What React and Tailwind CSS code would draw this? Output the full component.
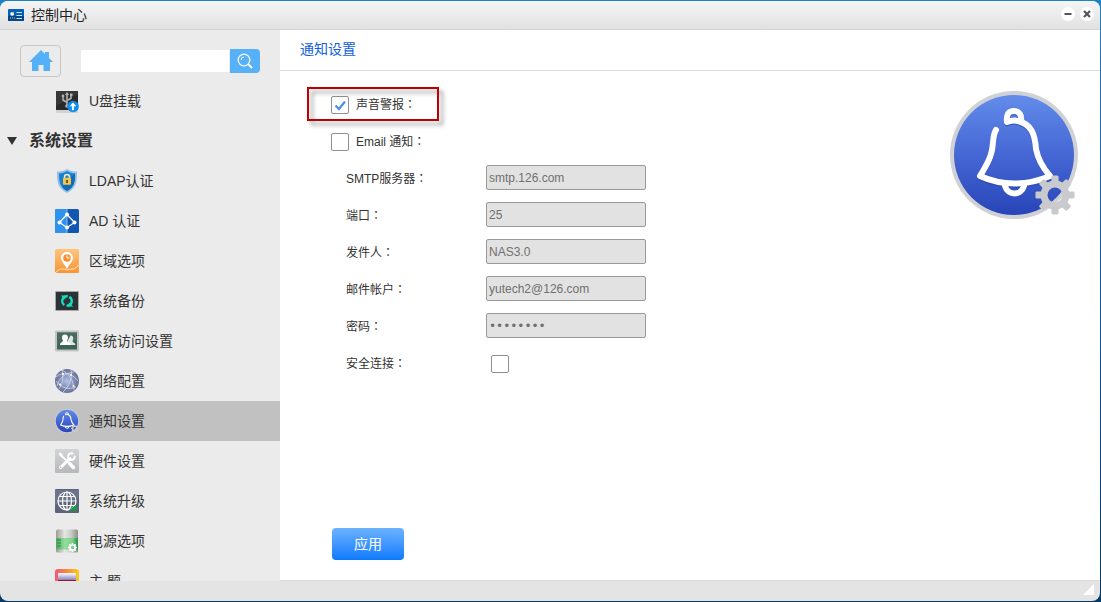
import React, { useState } from 'react';

const GEAR_ANGLES = [0, 45, 90, 135, 180, 225, 270, 315];

const Gear = ({ cx, cy, r, color }) => (
    <g transform={`translate(${cx} ${cy}) scale(${r / 19})`}>
        <circle r="11" fill="none" stroke={color} strokeWidth="7" />
        {GEAR_ANGLES.map((angle) => (
            <rect key={angle} x="-3.6" y="-19.5" width="7.2" height="9" rx="1.4" fill={color} transform={`rotate(${angle})`} />
        ))}
    </g>
);

const BellIcon = ({ id, className }) => (
    <svg viewBox="0 0 128 128" className={className} aria-hidden="true">
        <defs>
            <linearGradient id={id} x1="0" y1="0" x2="0" y2="1">
                <stop offset="0" stopColor="#628ceb" />
                <stop offset="0.5" stopColor="#4567d4" />
                <stop offset="1" stopColor="#2845b8" />
            </linearGradient>
        </defs>
        <circle cx="64" cy="64" r="64" fill="#d0d1d5" />
        <circle cx="64" cy="64" r="60" fill={`url(#${id})`} />
        <g fill="none" strokeLinecap="round" strokeLinejoin="round">
            <g stroke="#2b459f" strokeOpacity="0.45" strokeWidth="6" transform="translate(0 1.5)">
                <path d="M46 39C42 45 44 54 41 63C39 71 34 78 30 85C52 95 77 95 100 85C93 77 88 69 86 58C85 43 81 33 68 30C64 29 60 30 57 31C56 23 59 20 64 20C69 20 72 24 71 30" />
            </g>
            <g stroke="#ffffff" strokeWidth="6">
                <path d="M46 39C42 45 44 54 41 63C39 71 34 78 30 85C52 95 77 95 100 85C93 77 88 69 86 58C85 43 81 33 68 30C64 29 60 30 57 31C56 23 59 20 64 20C69 20 72 24 71 30" />
                <path d="M55 95C58 105 71 105 74 95" />
            </g>
        </g>
        <Gear cx={105} cy={104} r={19} color="#c9cacd" />
    </svg>
);

const UsbIcon = () => (
    <svg viewBox="0 0 24 24" className="size-6" aria-hidden="true">
        <rect x="1" y="20" width="22" height="4" rx="1.500" fill="#d2d2d2" />
        <path d="M1 2h22v19H1z" fill="#2a2a2a" />
        <path d="M1 2h22v3L1 17z" fill="#444444" opacity="0.500" />
        <g fill="none" stroke="#b4b4b4" strokeWidth="1.500">
            <path d="M12 16V5M12 13.500L8 11V7M12 11.500L16 9.500V6" />
        </g>
        <path d="M10 6l2-3 2 3z" fill="#b4b4b4" />
        <circle cx="8" cy="7" r="1.400" fill="#b4b4b4" />
        <path d="M15 4.500h2.500V7H15z" fill="#b4b4b4" />
        <circle cx="12" cy="17" r="1.800" fill="#b4b4b4" />
        <circle cx="18" cy="17.500" r="5.800" fill="#0c8cf0" />
        <path d="M18 13.500l3.300 3.800h-2.200v4h-2.200v-4h-2.200z" fill="#ffffff" />
    </svg>
);

const ShieldIcon = () => (
    <svg viewBox="0 0 24 24" className="size-6" aria-hidden="true">
        <path d="M12 0C15 2 18.500 2.500 22 2.500C22 12 22 19 12 24C2 19 2 12 2 2.500C5.500 2.500 9 2 12 0Z" fill="#93bfe8" />
        <path d="M12 2C14.500 3.700 17 4.300 20 4.400C20 12 19.500 18 12 22C4.500 18 4 12 4 4.400C7 4.300 9.500 3.700 12 2Z" fill="#1b80cf" />
        <path d="M20 4.400C20 12 19.500 18 12 22L7 18z" fill="#126bb4" />
        <path d="M9.500 9.500V8a2.500 2.500 0 0 1 5 0v1.500" fill="none" stroke="#f2ead0" strokeWidth="1.500" />
        <rect x="8" y="8.800" width="8" height="7" rx="1" fill="#f0c64a" />
        <path d="M12 11v3" stroke="#56502f" strokeWidth="1.800" />
    </svg>
);

const DirectoryIcon = () => (
    <svg viewBox="0 0 24 24" className="size-6" aria-hidden="true">
        <rect width="24" height="24" rx="1.500" fill="#1256b4" />
        <path d="M1.500 0H12v24H1.500A1.500 1.500 0 0 1 0 22.500v-21A1.500 1.500 0 0 1 1.500 0z" fill="#3092ee" />
        <path d="M12 0v24" stroke="#a8cff5" strokeWidth="0.800" />
        <path d="M12 5.500L19.500 13.500L12 18.500L4.500 13.500Z" fill="none" stroke="#ffffff" strokeWidth="1.200" />
        <g fill="#ffffff">
            <circle cx="12" cy="5.500" r="2" />
            <circle cx="19.500" cy="13.500" r="2" />
            <circle cx="12" cy="18.500" r="2" />
            <circle cx="4.500" cy="13.500" r="2" />
        </g>
    </svg>
);

const RegionIcon = () => (
    <svg viewBox="0 0 24 24" className="size-6" aria-hidden="true">
        <defs>
            <linearGradient id="region" x1="0" y1="0" x2="0" y2="1">
                <stop offset="0" stopColor="#fbc57c" />
                <stop offset="1" stopColor="#fb9435" />
            </linearGradient>
        </defs>
        <rect width="24" height="24" rx="1.500" fill="url(#region)" />
        <path d="M0 24l5-4h4l3 1 4-1h3l5-4" fill="none" stroke="#fde0bd" strokeWidth="1" />
        <path d="M12 3c3.700 0 6 2.600 6 5.800 0 3.700-3.900 6.700-6 11.200-2.100-4.500-6-7.500-6-11.200C6 5.600 8.300 3 12 3z" fill="#ffffff" />
        <circle cx="12" cy="9" r="3.800" fill="#f98f30" />
        <path d="M12 6.500V9h2.500" fill="none" stroke="#ffffff" strokeWidth="1" />
    </svg>
);

const BackupIcon = () => (
    <svg viewBox="0 0 24 24" className="size-6" aria-hidden="true">
        <rect y="2" width="24" height="20" rx="1" fill="#a5a7a7" />
        <rect x="1" y="3" width="22" height="18" fill="#2d3335" />
        <circle cx="12" cy="12" r="4.800" fill="none" stroke="#13e0bd" strokeWidth="2.400" strokeDasharray="12.500 2.580" transform="rotate(-60 12 12)" />
        <path d="M5.800 6.500h4.400v4.200zM18.200 17.500h-4.400v-4.200z" fill="#13e0bd" />
    </svg>
);

const UsersIcon = () => (
    <svg viewBox="0 0 24 24" className="size-6" aria-hidden="true">
        <rect y="1.500" width="24" height="21" rx="1" fill="#c3c5c4" />
        <rect x="2" y="3.500" width="20" height="17" fill="#3d6256" />
        <path d="M2 3.500h20v8L2 16z" fill="#4c7266" opacity="0.600" />
        <path d="M15.500 6.500c2 0 3 1.500 2.700 3.500-.2 1.300-.7 1.700-.7 2.500.5 1 2.500 1.200 3 3.500h-6l-2-4z" fill="#dfe6e3" />
        <path d="M10 5.500c2.200 0 3.200 1.600 2.900 3.700-.2 1.400-.8 1.900-.8 2.800.5 1.200 3.400 1.200 3.900 4H5c.4-2.800 2.400-2.800 2.900-4 0-.9-.6-1.400-.8-2.800C6.800 7.100 7.800 5.500 10 5.500z" fill="#ffffff" />
    </svg>
);

const NetworkIcon = () => (
    <svg viewBox="0 0 24 24" className="size-6" aria-hidden="true">
        <defs>
            <radialGradient id="network">
                <stop offset="0" stopColor="#b4c3ea" />
                <stop offset="0.600" stopColor="#7f8cb4" />
                <stop offset="1" stopColor="#68739a" />
            </radialGradient>
        </defs>
        <circle cx="12" cy="12" r="12" fill="url(#network)" />
        <g fill="none" stroke="#dfe3ee" strokeWidth="0.700">
            <path d="M1 8C8 2 17 4 23 12M7 1C13 4 19 11 19 21M2 17C4 9 10 4 19 3M4 20C9 13 8 6 7 1M1 12C6 19 14 21 21 18M16 1C18 8 14 18 8 23" />
        </g>
        <g fill="#ffffff">
            <circle cx="8" cy="5" r="1.100" />
            <circle cx="16" cy="6" r="1" />
            <circle cx="18.500" cy="17" r="1.100" />
            <circle cx="5" cy="15.500" r="1" />
        </g>
    </svg>
);

const ToolsIcon = () => (
    <svg viewBox="0 0 24 24" className="size-6" aria-hidden="true">
        <defs>
            <linearGradient id="tools" x1="0" y1="0" x2="0" y2="1">
                <stop offset="0" stopColor="#d3d4d6" />
                <stop offset="1" stopColor="#b7b8bb" />
            </linearGradient>
        </defs>
        <rect width="24" height="24" rx="1.500" fill="url(#tools)" />
        <g fill="none" stroke="#ffffff" strokeLinecap="round">
            <path d="M5.500 18.500L15 9.500" strokeWidth="3" />
            <path d="M17.500 4.500A3.300 3.300 0 1 0 19.700 7.500" strokeWidth="2" />
            <path d="M5 5.500L12.500 12.500" strokeWidth="1.800" />
            <path d="M14.500 14.500L18.500 18.500" strokeWidth="3.400" />
        </g>
        <path d="M3.500 4.500l1.500-1 3 2-1.500 2z" fill="#ffffff" />
        <circle cx="5.700" cy="18.300" r="0.800" fill="#b9babc" />
    </svg>
);

const UpgradeIcon = () => (
    <svg viewBox="0 0 24 24" className="size-6" aria-hidden="true">
        <rect width="24" height="24" rx="1" fill="#5d637b" />
        <path d="M0 1h24v8L0 16z" fill="#747a91" opacity="0.700" />
        <g fill="none" stroke="#ffffff" strokeWidth="1.200">
            <circle cx="12" cy="12" r="9" />
            <ellipse cx="12" cy="12" rx="4.500" ry="9" />
            <path d="M12 3v18M3 12h18M4.500 7.500h15M4.500 16.500h15" />
        </g>
        <path d="M21.500 15.500v6h-8z" fill="#10a13a" />
    </svg>
);

const PowerIcon = () => (
    <svg viewBox="0 0 24 24" className="size-6" aria-hidden="true">
        <defs>
            <linearGradient id="metal">
                <stop offset="0" stopColor="#9c9c9a" />
                <stop offset="0.400" stopColor="#e6e6e3" />
                <stop offset="0.700" stopColor="#c8c8c4" />
                <stop offset="1" stopColor="#8d8d8b" />
            </linearGradient>
            <linearGradient id="charge">
                <stop offset="0" stopColor="#4aa75c" />
                <stop offset="0.400" stopColor="#93dd9e" />
                <stop offset="0.750" stopColor="#7fd08c" />
                <stop offset="1" stopColor="#259040" />
            </linearGradient>
        </defs>
        <rect x="1" y="0.500" width="22" height="23" rx="1.500" fill="url(#metal)" />
        <rect x="1" y="9" width="22" height="11.500" fill="url(#charge)" />
        <path d="M2 11h4M2 14h4M2 17h4" stroke="#2d8141" strokeWidth="1" />
        <Gear cx={17.5} cy={18.5} r={4.4} color="#ffffff" />
    </svg>
);

const ThemeIcon = () => (
    <svg viewBox="0 0 24 24" className="size-6" aria-hidden="true">
        <defs>
            <linearGradient id="theme" x1="0" y1="0" x2="1" y2="0">
                <stop offset="0" stopColor="#f5577b" />
                <stop offset="0.500" stopColor="#f98a35" />
                <stop offset="1" stopColor="#fccb1c" />
            </linearGradient>
            <linearGradient id="roller" x1="0" y1="0" x2="0" y2="1">
                <stop offset="0" stopColor="#ffffff" />
                <stop offset="1" stopColor="#8b7fb9" />
            </linearGradient>
        </defs>
        <rect width="24" height="24" rx="3" fill="url(#theme)" />
        <rect x="3" y="4" width="18" height="7" rx="1" fill="url(#roller)" />
        <rect x="3" y="11" width="18" height="9" fill="#8e1731" />
    </svg>
);

const MENU_ITEMS = [
    { id: 'ldap', name: 'LDAP认证', icon: <ShieldIcon /> },
    { id: 'ad', name: 'AD 认证', icon: <DirectoryIcon /> },
    { id: 'region', name: '区域选项', icon: <RegionIcon /> },
    { id: 'backup', name: '系统备份', icon: <BackupIcon /> },
    { id: 'access', name: '系统访问设置', icon: <UsersIcon /> },
    { id: 'network', name: '网络配置', icon: <NetworkIcon /> },
    { id: 'notify', name: '通知设置', icon: <BellIcon id="bell-small" className="size-6" /> },
    { id: 'hardware', name: '硬件设置', icon: <ToolsIcon /> },
    { id: 'upgrade', name: '系统升级', icon: <UpgradeIcon /> },
    { id: 'power', name: '电源选项', icon: <PowerIcon /> },
    { id: 'theme', name: '主 题', icon: <ThemeIcon /> },
];

const MAIL_FIELDS = [
    { id: 'smtp', label: 'SMTP服务器', type: 'text', value: 'smtp.126.com' },
    { id: 'port', label: '端口', type: 'text', value: '25' },
    { id: 'sender', label: '发件人', type: 'text', value: 'NAS3.0' },
    { id: 'account', label: '邮件帐户', type: 'text', value: 'yutech2@126.com' },
    { id: 'password', label: '密码', type: 'password', value: '12345678' },
];

const MenuItem = ({ item, active, onSelect }) => (
    <a
        href={`#${item.id}`}
        onClick={() => onSelect(item.id)}
        className={`flex h-10 shrink-0 items-center gap-[10px] pl-[55px] text-sm ${active ? 'bg-[#c1c1c1]' : ''}`}
    >
        {item.icon}
        {item.name}
    </a>
);

const FieldLabel = ({ htmlFor, className = '', children }) => (
    <label htmlFor={htmlFor} className={`pt-[2px] ${className}`}>
        {children}
        {/* the TC face centres the full-width colon */}
        <span className="font-['Noto_Sans_CJK_TC',sans-serif]">：</span>
    </label>
);

const CheckBox = ({ id, checked, onChange }) => (
    <span className="mt-[3px] grid size-[18px] shrink-0">
        <input
            id={id}
            type="checkbox"
            checked={checked}
            onChange={(e) => onChange(e.target.checked)}
            className="col-start-1 row-start-1 size-[18px] appearance-none rounded-xs border border-[#8f8f8f] bg-white"
        />
        {checked && (
            <svg viewBox="0 0 18 18" className="pointer-events-none col-start-1 row-start-1 size-[18px]" aria-hidden="true">
                <path d="M4.500 9.500L8 13L14 5.500" fill="none" stroke="#4a90e2" strokeWidth="2.200" />
            </svg>
        )}
    </span>
);

const TitleBar = () => (
    <header className="flex h-[29px] shrink-0 items-center border-b border-[#d2d2d2] bg-linear-to-b from-[#f5f5f5] to-[#e1e1e1] pr-[6px] pl-2">
        <svg viewBox="0 0 16 12" className="mr-[7px] h-3 w-4" aria-hidden="true">
            <rect width="16" height="12" rx="0.800" fill="#0560b8" />
            <path d="M0 7h16v4.200a.8.8 0 0 1-.8.8H.8a.8.8 0 0 1-.8-.8z" fill="#04478c" />
            <circle cx="4.200" cy="4.800" r="1.900" fill="#ffffff" />
            <path d="M4.200 4.800V2.900a1.900 1.900 0 0 1 1.900 1.900z" fill="#f5c52c" />
            <path d="M2 9h1M4 9h1M6 9h1" stroke="#e8c860" strokeWidth="1" />
            <path d="M8.500 3.500h5.500M8.500 6.500h5.500M8.500 9.500h5.500" stroke="#cfe4f8" strokeWidth="1" />
        </svg>
        <h1 className="flex-1 text-sm text-[#222222]">控制中心</h1>
        <div className="flex gap-[5px] pb-[2px]">
            <button type="button" aria-label="最小化" className="size-[14px] rounded-full bg-white">
                <svg viewBox="0 0 14 14" aria-hidden="true">
                    <path d="M3.500 7h7" stroke="#555555" strokeWidth="2" />
                </svg>
            </button>
            <button type="button" aria-label="关闭" className="size-[14px] rounded-full bg-white">
                <svg viewBox="0 0 14 14" aria-hidden="true">
                    <path d="M4 4l6 6M10 4l-6 6" stroke="#555555" strokeWidth="2.200" />
                </svg>
            </button>
        </div>
    </header>
);

const Sidebar = ({ current, onSelect }) => (
    <aside className="flex w-[280px] shrink-0 flex-col overflow-hidden bg-[#ebebeb] text-[#333333]">
        <div className="flex shrink-0 items-center px-5 pt-[15px] pb-1">
            <button
                type="button"
                aria-label="主页"
                className="mr-5 flex h-8 w-[41px] items-center justify-center rounded-sm border border-[#c6c6c6]"
            >
                <svg viewBox="0 0 24 22" className="h-[22px] w-6" aria-hidden="true">
                    <path d="M12 0L0 12h3v9h6.500v-6h5v6H21v-9h3L20 8V2h-4v2z" fill="#54b0f7" />
                </svg>
            </button>
            <input type="text" aria-label="搜索" className="h-[22px] min-w-0 flex-1 bg-white px-1 text-xs outline-none" />
            <button
                type="button"
                aria-label="搜索"
                className="ml-px flex h-6 w-[30px] items-center justify-center rounded-r-sm bg-[#56b1f8]"
            >
                <svg viewBox="0 0 16 16" className="size-4" fill="none" stroke="#ffffff" aria-hidden="true">
                    <circle cx="7" cy="7" r="5.800" strokeWidth="1.300" />
                    <path d="M4 7a3 3 0 0 1 3-3" strokeWidth="0.900" />
                    <path d="M11.200 11.200L15 15" strokeWidth="1.800" />
                </svg>
            </button>
        </div>
        <nav className="flex min-h-0 flex-1 flex-col overflow-hidden">
            <MenuItem item={{ id: 'usb', name: 'U盘挂载', icon: <UsbIcon /> }} active={current === 'usb'} onSelect={onSelect} />
            <button type="button" className="flex h-10 shrink-0 items-center gap-3 pl-[7px] text-base font-bold">
                <svg viewBox="0 0 10 8" className="h-2 w-[10px]" aria-hidden="true">
                    <path d="M0 0h10L5 8z" fill="#333333" />
                </svg>
                系统设置
            </button>
            {MENU_ITEMS.map((item) => (
                <MenuItem key={item.id} item={item} active={current === item.id} onSelect={onSelect} />
            ))}
        </nav>
    </aside>
);

const NotificationSettings = () => {
    const [sound, setSound] = useState(true);
    const [email, setEmail] = useState(false);
    const [secure, setSecure] = useState(false);

    return (
        <main className="flex min-w-0 flex-1 flex-col border-b border-[#d9d9d9] bg-white">
            <h2 className="flex h-[41px] shrink-0 items-center border-b border-[#dcdcdc] px-5 pb-[2px] text-sm text-[#1160dd]">
                通知设置
            </h2>
            <form className="flex flex-1 flex-col pt-[14px] pr-[22px] pb-5 pl-[51px]" onSubmit={(e) => e.preventDefault()}>
                <div className="flex items-start justify-between">
                    <div className="text-xs text-[#333333]">
                        <div className="relative flex h-[37px] w-fit items-center gap-[7px]">
                            <CheckBox id="sound" checked={sound} onChange={setSound} />
                            <FieldLabel htmlFor="sound">声音警报</FieldLabel>
                            <div className="pointer-events-none absolute top-[2px] -right-[23px] bottom-px -left-6 border-2 border-[#c00000] drop-shadow-[4px_4px_2px_rgba(0,0,0,0.4)]" />
                        </div>
                        <div className="flex h-[37px] items-center gap-[7px]">
                            <CheckBox id="email" checked={email} onChange={setEmail} />
                            <FieldLabel htmlFor="email">Email 通知</FieldLabel>
                        </div>
                        {MAIL_FIELDS.map((field) => (
                            <div key={field.id} className="flex h-[37px] items-center pl-[15px]">
                                <FieldLabel htmlFor={field.id} className="w-[140px]">{field.label}</FieldLabel>
                                <input
                                    id={field.id}
                                    type={field.type}
                                    defaultValue={field.value}
                                    disabled={!email}
                                    className={`h-[25px] w-40 rounded-xs border border-[#999999] bg-white px-[2px] text-xs text-[#333333] disabled:bg-[#e2e2e2] disabled:text-[#707070] ${field.type === 'password' ? "font-['DejaVu_Sans',sans-serif]" : ''}`}
                                />
                            </div>
                        ))}
                        <div className="flex h-[37px] items-center pl-[15px]">
                            <FieldLabel htmlFor="secure" className="w-[145px]">安全连接</FieldLabel>
                            <CheckBox id="secure" checked={secure} onChange={setSecure} />
                        </div>
                    </div>
                    <BellIcon id="bell-large" className="mt-[6px] size-32 shrink-0" />
                </div>
                <button
                    type="submit"
                    className="mt-auto ml-px h-8 w-[72px] rounded-sm bg-linear-to-b from-[#69b2ff] to-[#067aff] text-sm text-white"
                >
                    应用
                </button>
            </form>
        </main>
    );
};

const App = () => {
    const [current, setCurrent] = useState('notify');

    return (
        <div className="h-screen bg-linear-to-b from-[#1e83c4] via-[#0a559c] to-[#063a66] pt-px pr-px pb-px font-['Liberation_Sans','Noto_Sans_CJK_SC',sans-serif]">
            <div className="flex h-full flex-col overflow-hidden rounded-lg bg-[#e4e4e4]">
                <TitleBar />
                <div className="flex min-h-0 flex-1">
                    <Sidebar current={current} onSelect={setCurrent} />
                    <NotificationSettings />
                </div>
                <footer className="flex h-5 shrink-0 items-start justify-end pt-[3px] pr-[6px]">
                    <svg viewBox="0 0 11 11" className="size-[11px]" aria-hidden="true">
                        <path d="M11 0v11H0z" fill="#ffffff" />
                    </svg>
                </footer>
            </div>
        </div>
    );
};

export default App;
